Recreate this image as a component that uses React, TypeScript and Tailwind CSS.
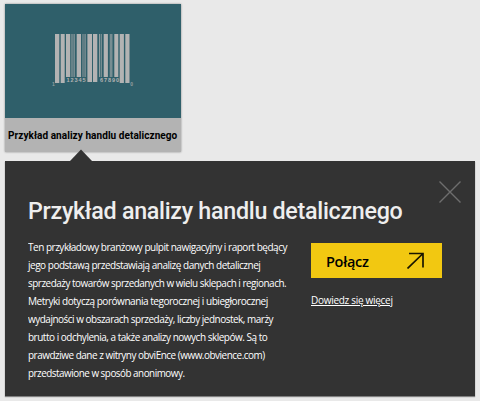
const lines = [
  { text: 'Ten przykładowy branżowy pulpit nawigacyjny i raport będący', cls: 'scale-x-[0.962]' },
  { text: 'jego podstawą przedstawiają analizę danych detalicznej', cls: 'scale-x-[0.962]' },
  { text: 'sprzedaży towarów sprzedanych w wielu sklepach i regionach.', cls: 'scale-x-[0.953]' },
  { text: 'Metryki dotyczą porównania tegorocznej i ubiegłorocznej', cls: 'scale-x-[0.968]' },
  { text: 'wydajności w obszarach sprzedaży, liczby jednostek, marży', cls: 'scale-x-[0.957]' },
  { text: 'brutto i odchylenia, a także analizy nowych sklepów. Są to', cls: 'scale-x-[0.96]' },
  { text: 'prawdziwe dane z witryny obviEnce (www.obvience.com)', cls: 'scale-x-[0.956]' },
  { text: 'przedstawione w sposób anonimowy.', cls: 'scale-x-[0.947]' },
];

// [x, width, height, opacity]
const bars = [
  [3, 4.3, 49, 1], [8.7, 4, 49, 1], [14, 4.2, 43, 1], [19.3, 1.4, 43, 0.6], [21.4, 1.5, 43, 0.6],
  [24.7, 4.3, 43, 1], [30.4, 1.2, 43, 0.6], [32.4, 1.4, 43, 0.6], [35.4, 4.6, 48, 1], [41, 4.3, 48, 1],
  [47, 1.3, 43, 0.75], [49.1, 0.9, 43, 0.6], [51.7, 4.2, 43, 1], [57.7, 2.8, 43, 0.55],
  [62.3, 4, 43, 1], [67.7, 4.2, 49, 1], [73.3, 4.2, 49, 1],
];

function Barcode() {
  return (
    <svg width="82" height="54" viewBox="0 0 82 54" className="block" fill="#b3b3b3">
      {bars.map(([x, w, h, o]) => (
        <rect key={x} x={x} y="0" width={w} height={h} opacity={o} />
      ))}
      <g fontFamily="Liberation Sans, sans-serif" fontSize="5.6" fontWeight="bold">
        <text x="14.5" y="48" textLength="19">12345</text>
        <text x="48" y="48" textLength="19">67890</text>
        <g fontSize="5" opacity="0.75">
          <text x="0" y="51.7">1</text>
          <text x="78.3" y="51.7">0</text>
        </g>
      </g>
    </svg>
  );
}

export default function App() {
  return (
    <div className="h-[401px] w-[480px] overflow-hidden bg-[#e9e9e9] pl-[5px] pt-1">
      <div className="h-[148px] w-[176px] bg-[#b3b3b3] shadow-[0_0_2px_rgba(0,0,0,0.4)]">
        <div className="flex h-[114px] items-start bg-[#2f5f6a] pl-[47px] pt-[30px]">
          <Barcode />
        </div>
        <div className="flex h-[34px] items-center whitespace-nowrap pl-[3px] pt-px font-['Roboto',sans-serif] text-[10.2px] font-bold text-black">
          <span className="origin-left scale-x-[0.985] tracking-[0.05px]">Przykład analizy handlu detalicznego</span>
        </div>
      </div>
      <svg width="22" height="12" viewBox="0 0 22 12" className="relative -mt-[3px] ml-[65px] block" fill="#333">
        <path d="M0 12 11 0.5 22 12Z" />
      </svg>
      <div className="h-[235px] w-[470px] bg-[#333] text-white shadow-[0_1px_1px_rgba(0,0,0,0.45)]">
        <div className="flex h-[79px] justify-between pl-[23px] pr-[14px]">
          <h1 className="w-[374px] origin-left scale-x-[0.962] whitespace-nowrap pt-[34px] font-['Roboto',sans-serif] text-[24.2px] font-medium leading-[32px] tracking-[-0.3px] text-[#eee]">
            Przykład analizy handlu detalicznego
          </h1>
          <svg width="22" height="22" viewBox="0 0 22 22" className="mt-5" stroke="#6e6e6e" strokeWidth="1.4">
            <path d="M0.5 0.5 21.5 21.5M21.5 0.5 0.5 21.5" />
          </svg>
        </div>
        <div className="flex pl-[23px] font-['Open_Sans',sans-serif]">
          <div className="-mt-[2px] w-[283px] shrink-0 text-[10.4px] leading-[18px] text-white">
            {lines.map((l) => (
              <div key={l.text} className={`origin-left whitespace-nowrap tracking-[-0.5px] ${l.cls}`}>
                {l.text}
              </div>
            ))}
          </div>
          <div className="pt-[3px]">
            <button className="flex h-[35px] w-[131px] items-center justify-between bg-[#f2c811] pl-[15px] pr-[18px] text-black">
              <span className="pt-[2px] text-[14.5px] font-semibold tracking-[-0.3px]">Połącz</span>
              <svg width="17" height="17" viewBox="0 0 17 17" fill="none" stroke="#1a1600" strokeWidth="1.7">
                <path d="M2 1.5H16V15.5M16 1.5 0.5 16.5" />
              </svg>
            </button>
            <a className="mt-[13px] block origin-left scale-x-[0.962] whitespace-nowrap text-[10.4px] leading-[18px] tracking-[-0.3px] underline">Dowiedz się więcej</a>
          </div>
        </div>
      </div>
    </div>
  );
}
